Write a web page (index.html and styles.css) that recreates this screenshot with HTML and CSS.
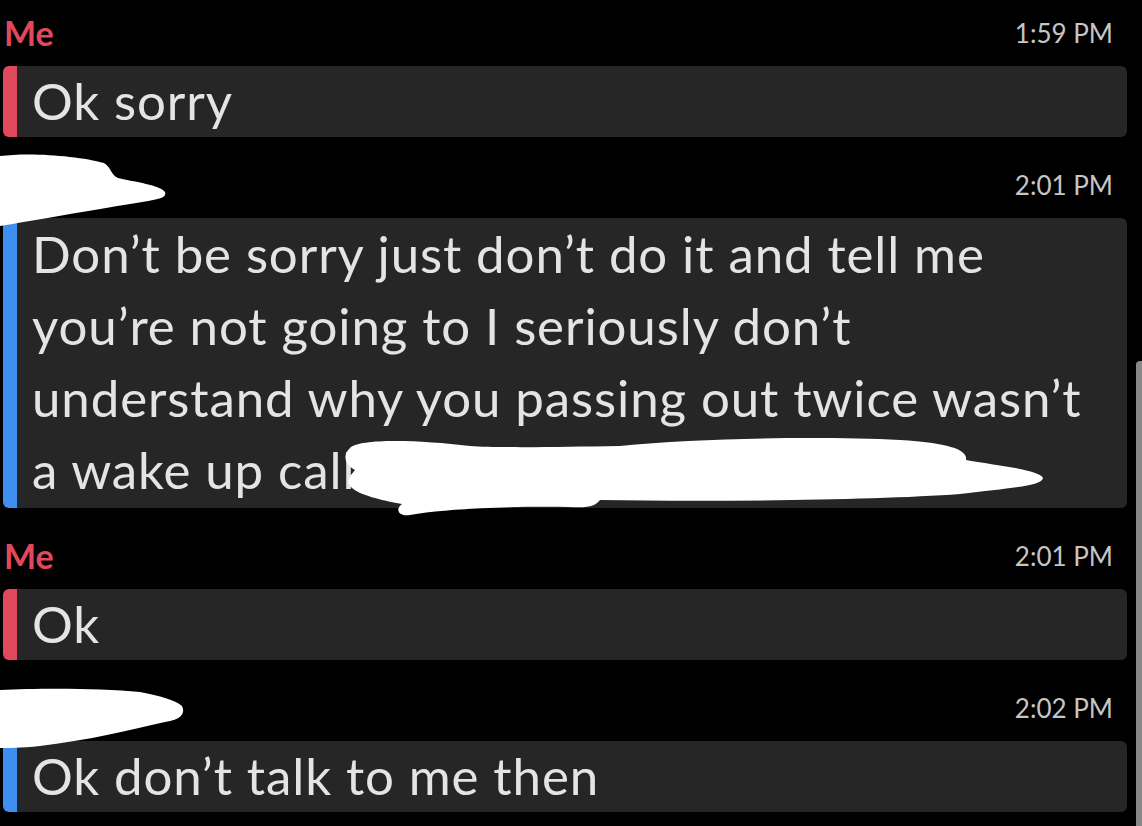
FILE: index.html
```html
<!DOCTYPE html>
<html>
<head>
<meta charset="utf-8">
<link rel="stylesheet" href="styles.css">
</head>
<body>
<div class="page">
  <div class="thread">
    <div class="msg">
      <div class="head"><span class="name">Me</span><span class="time">1:59 PM</span></div>
      <div class="bubble me">Ok sorry</div>
    </div>
    <div class="msg">
      <div class="head"><span class="name other"></span><span class="time">2:01 PM</span></div>
      <div class="bubble them long">Don’t be sorry just don’t do it and tell me<br>you’re not going to I seriously don’t<br>understand why you passing out twice wasn’t<br>a wake up call</div>
    </div>
    <div class="msg">
      <div class="head"><span class="name">Me</span><span class="time">2:01 PM</span></div>
      <div class="bubble me">Ok</div>
    </div>
    <div class="msg">
      <div class="head"><span class="name other"></span><span class="time">2:02 PM</span></div>
      <div class="bubble them">Ok don’t talk to me then</div>
    </div>
  </div>
  <div class="scrollbar"></div>
  <svg class="scribbles" width="1142" height="826" viewBox="0 0 1142 826">
    <path d="M0,156 C30,152 80,156 104,163 C112,168 110,174 118,178 C135,182 160,185 165,192 C167,198 158,199 148,201 C110,207 60,216 0,226 Z"/>
    <path d="M350,448 C360,438 420,440 470,446 C500,448 560,447 620,446 C700,438 820,436 900,440 C950,443 968,450 966,460 C1000,466 1040,470 1043,478 C1042,486 1010,488 960,494 C880,500 720,502 600,500 C595,506 590,508 570,507 C520,506 450,508 410,515 C400,517 394,510 402,504 C380,500 360,495 352,488 C345,482 350,476 355,470 C345,465 342,455 350,448 Z"/>
    <path d="M0,690 C40,688 100,688 140,692 C160,696 175,700 182,706 C186,714 180,720 165,722 C130,730 90,740 40,746 C20,748 8,748 0,748 Z"/>
  </svg>
</div>
</body>
</html>
```
FILE: styles.css
```css
html, body {
  margin: 0;
  padding: 0;
  background: #000;
}
.page {
  position: relative;
  width: 1142px;
  height: 826px;
  overflow: hidden;
  background: #000;
  font-family: Lato, "Noto Sans", sans-serif;
}
.thread {
  display: flex;
  flex-direction: column;
  padding: 0 15px 0 3px;
}
.head {
  display: flex;
  justify-content: space-between;
  align-items: center;
  height: 28px;
  padding: 34px 14px 19px 1px;
}
.msg:first-child .head {
  padding-top: 19px;
}
.name {
  color: #e0485c;
  font-weight: 700;
  font-size: 34px;
  line-height: 28px;
}
.time {
  color: #c6c6c6;
  font-size: 26px;
  line-height: 28px;
}
.bubble {
  background: #262626;
  border-radius: 6px;
  color: #e4e4e4;
  font-size: 51px;
  letter-spacing: 0.9px;
  line-height: 69px;
  padding: 0 10px 2px 15px;
  white-space: nowrap;
}
.bubble.me {
  border-left: 14px solid #e0485c;
}
.bubble.them {
  border-left: 14px solid #3f8ff0;
}
.bubble.long {
  line-height: 72px;
  padding-bottom: 2px;
}
.scrollbar {
  position: absolute;
  right: 0;
  top: 361px;
  width: 6px;
  height: 470px;
  background: #888;
  border-radius: 4px 0 0 0;
}
.scribbles {
  position: absolute;
  left: 0;
  top: 0;
  fill: #fff;
  pointer-events: none;
}
```
